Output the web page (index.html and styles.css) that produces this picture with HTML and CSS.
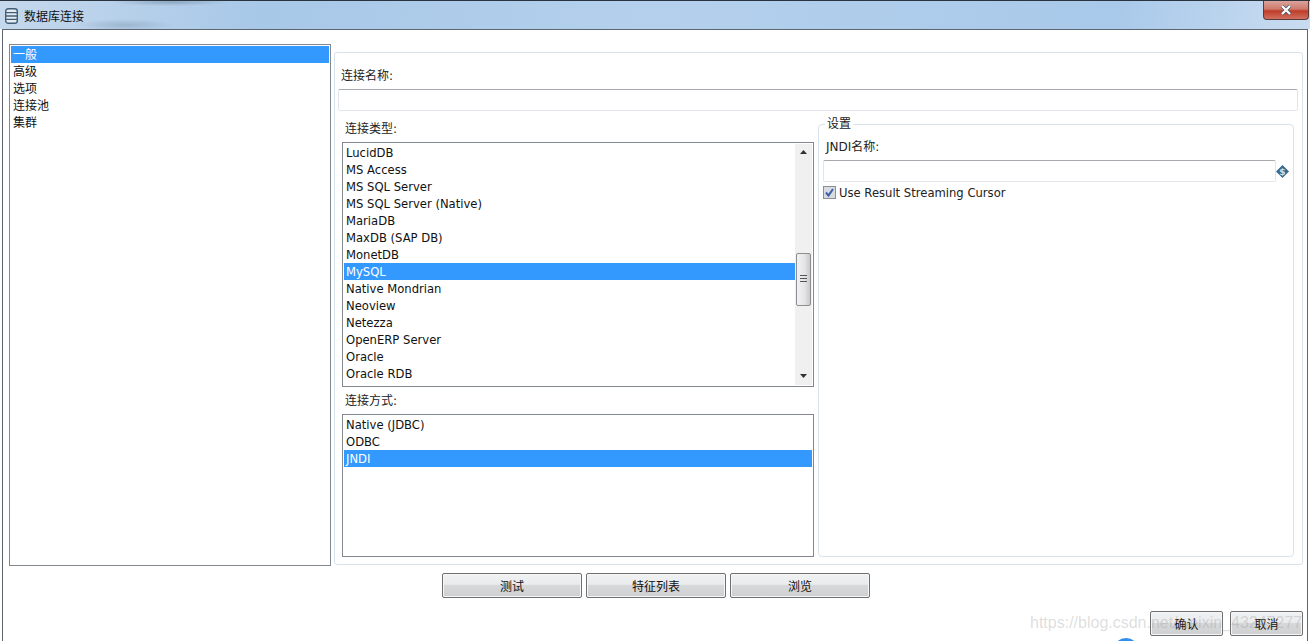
FILE: index.html
```html
<!DOCTYPE html>
<html lang="zh">
<head>
<meta charset="utf-8">
<title>数据库连接</title>
<link rel="stylesheet" href="styles.css">
</head>
<body>
<div class="window">
  <header class="titlebar">
    <div class="title-left">
      <svg class="db-icon" width="13" height="16" viewBox="0 0 13 16">
        <rect x=".7" y=".7" width="11.6" height="14.6" rx="2.6" fill="#e4eaf0" stroke="#3f5f78" stroke-width="1.4"/>
        <path d="M1 4.6h11M1 8h11M1 11.4h11" stroke="#3f5f78" stroke-width="1.3" fill="none"/>
      </svg>
      <span class="title-text">数据库连接</span>
    </div>
    <div class="close-btn">
      <svg width="12" height="10" viewBox="0 0 12 10">
        <path d="M2 1l8 8M10 1l-8 8" stroke="#4a5a6a" stroke-width="3.8" fill="none"/>
        <path d="M2 1l8 8M10 1l-8 8" stroke="#fff" stroke-width="2.2" fill="none"/>
      </svg>
    </div>
  </header>
  <div class="client">
    <div class="main">
      <ul class="list nav">
        <li class="sel">一般</li>
        <li>高级</li>
        <li>选项</li>
        <li>连接池</li>
        <li>集群</li>
      </ul>
      <section class="panel">
        <label class="lbl name-lbl">连接名称:</label>
        <div class="input name-input"></div>
        <div class="columns">
          <div class="col-left">
            <label class="lbl type-lbl">连接类型:</label>
            <div class="typebox">
              <ul class="list-inner type-items">
                <li>LucidDB</li>
                <li>MS Access</li>
                <li>MS SQL Server</li>
                <li>MS SQL Server (Native)</li>
                <li>MariaDB</li>
                <li>MaxDB (SAP DB)</li>
                <li>MonetDB</li>
                <li class="sel">MySQL</li>
                <li>Native Mondrian</li>
                <li>Neoview</li>
                <li>Netezza</li>
                <li>OpenERP Server</li>
                <li>Oracle</li>
                <li>Oracle RDB</li>
              </ul>
              <div class="scrollbar">
                <svg class="arrow up" width="7" height="4" viewBox="0 0 7 4"><path d="M3.5 0L7 4H0z" fill="#333"/></svg>
                <div class="thumb"><span class="grip"></span></div>
                <svg class="arrow down" width="7" height="4" viewBox="0 0 7 4"><path d="M0 0h7L3.5 4z" fill="#333"/></svg>
              </div>
            </div>
            <label class="lbl way-lbl">连接方式:</label>
            <ul class="waybox">
              <li>Native (JDBC)</li>
              <li>ODBC</li>
              <li class="sel">JNDI</li>
            </ul>
          </div>
          <fieldset class="settings">
            <legend>设置</legend>
            <label class="lbl jndi-lbl">JNDI名称:</label>
            <div class="jndi-row">
              <div class="input jndi-input"></div>
              <svg class="var-icon" width="13" height="13" viewBox="0 0 13 13">
                <path d="M6.5 0L13 6.5 6.5 13 0 6.5z" fill="#3a6a8e"/>
                <text class="var-glyph" x="6.5" y="9.6" text-anchor="middle">$</text>
              </svg>
            </div>
            <div class="check-row">
              <svg class="check" width="13" height="13" viewBox="0 0 13 13">
                <rect x=".5" y=".5" width="12" height="12" fill="#d8dce2" stroke="#8a8f96"/>
                <path d="M3 6.5l2.5 3L10 3" stroke="#3c5fa8" stroke-width="2" fill="none"/>
              </svg>
              <span>Use Result Streaming Cursor</span>
            </div>
          </fieldset>
        </div>
      </section>
    </div>
    <div class="actions">
      <button class="btn wide">测试</button>
      <button class="btn wide">特征列表</button>
      <button class="btn wide">浏览</button>
    </div>
    <div class="footer">
      <button class="btn small">确认</button>
      <button class="btn small">取消</button>
    </div>
    <div class="watermark">https://blog.csdn.net/weixin_43247277</div>
    <div class="blue-dot"></div>
  </div>
</div>
</body>
</html>
```
FILE: styles.css
```css
* { box-sizing: border-box; }
html, body { margin: 0; padding: 0; }
body {
  width: 1310px;
  height: 641px;
  overflow: hidden;
  background: #fff;
  font-family: "DejaVu Sans", "Noto Sans CJK SC", sans-serif;
  font-size: 12px;
  color: #111;
}
ul { list-style: none; margin: 0; padding: 0; }
.window {
  display: flex;
  flex-direction: column;
  height: 641px;
  overflow: hidden;
}
.titlebar {
  height: 29px;
  flex: none;
  display: flex;
  justify-content: space-between;
  align-items: flex-start;
  border-top: 1px solid #2a3440;
  padding: 0 1px 0 5px;
  background:
    radial-gradient(ellipse 50px 6px at 125px 24px, rgba(110, 135, 160, .35), transparent),
    radial-gradient(ellipse 60px 4px at 170px 1px, rgba(90, 110, 130, .4), transparent),
    linear-gradient(100deg, #c5d8ec 0%, #a8c8e8 20%, #b4d0ec 50%, #a9c9ea 85%, #c9dcf0 100%);
}
.title-left { display: flex; align-items: center; height: 28px; gap: 6px; padding-top: 1px; }
.title-text { font-size: 12px; color: #111; }
.db-icon { display: block; }
.close-btn {
  width: 46px;
  height: 19px;
  border: 1px solid #5a3a3a;
  border-top: 0;
  border-radius: 0 0 4px 4px;
  background: linear-gradient(#d9a39b 0%, #cf7a6c 45%, #bf3c28 55%, #d07060 100%);
  display: flex;
  align-items: center;
  justify-content: center;
}
.client {
  position: relative;
  flex: 1;
  margin: 0 2px;
  padding: 14px 4px 0 6px;
  border: 1px solid #5d6670;
  border-bottom: 0;
  background: #fff;
  min-height: 0;
}
.main { display: flex; height: 523px; gap: 3px; }
.list.nav {
  width: 322px;
  height: 522px;
  border: 1px solid #828790;
  padding: 1px;
  flex: none;
}
.nav li { height: 17px; line-height: 19px; padding-left: 2px; }
.sel { background: #3399ff; color: #fff; }
.panel {
  flex: 1;
  margin-top: 8px;
  height: 513px;
  border: 1px solid #d9e3ec;
  border-radius: 3px;
  padding: 0 4px 7px 3px;
  display: flex;
  flex-direction: column;
}
.lbl { display: block; color: #222; }
.name-lbl { height: 17px; line-height: 17px; margin: 15px 0 4px 3px; }
.input {
  background: #fff;
  border: 1px solid #e2e6ea;
  border-top-color: #a6a9ae;
  border-radius: 2px;
}
.name-input { height: 22px; }
.columns { display: flex; flex: 1; margin-top: 7px; margin-right: 4px; gap: 4px; min-height: 0; }
.col-left { width: 472px; margin-left: 4px; flex: none; display: flex; flex-direction: column; }
.type-lbl { height: 17px; line-height: 17px; margin: 3px 0 4px 3px; }
.typebox {
  height: 245px;
  display: flex;
  border: 1px solid #828790;
  padding: 1px 1px 1px 1px;
  font-size: 11.6px;
}
.list-inner { flex: 1; }
.type-items li { height: 17px; line-height: 19px; padding-left: 2px; }
.scrollbar {
  width: 17px;
  background: #f0f0f0;
  display: flex;
  flex-direction: column;
  align-items: center;
}
.arrow { display: block; flex: none; }
.arrow.up { margin-top: 6px; }
.arrow.down { margin-top: 68px; }
.thumb {
  width: 15px;
  height: 53px;
  margin-top: 99px;
  border: 1px solid #8b8f94;
  border-radius: 2px;
  background: linear-gradient(90deg, #f2f2f2, #e4e4e4 60%, #c8c8c8);
  display: flex;
  align-items: center;
  justify-content: center;
  flex: none;
}
.grip {
  display: block;
  width: 7px;
  height: 9px;
  background: repeating-linear-gradient(#555 0 1px, transparent 1px 3px);
}
.way-lbl { height: 17px; line-height: 17px; margin: 6px 0 4px 3px; }
.waybox {
  flex: 1;
  border: 1px solid #828790;
  padding: 1px;
  font-size: 11.6px;
}
.waybox li { height: 17px; line-height: 19px; padding-left: 2px; }
.settings {
  flex: 1;
  margin: -1px 0 0 0;
  padding: 0 3px 0 4px;
  border: 1px solid #d9e3ec;
  border-radius: 4px;
  min-width: 0;
}
.settings legend {
  padding: 0 2px;
  margin-left: 2px;
  line-height: 15px;
  color: #222;
}
.jndi-lbl { height: 17px; line-height: 17px; margin: 7px 0 4px 3px; }
.jndi-row { display: flex; align-items: center; }
.jndi-input { flex: 1; height: 22px; }
.var-icon { display: block; margin-right: 1px; }
.var-glyph { font-family: "DejaVu Sans", sans-serif; font-size: 9px; font-weight: 700; fill: #cfe0ec; }
.check-row { display: flex; align-items: center; gap: 3px; margin-top: 2px; height: 17px; color: #222; font-size: 11.6px; }
.check { display: block; flex: none; }
.actions {
  display: flex;
  justify-content: flex-start;
  gap: 4px;
  margin: 6px 0 0 433px;
}
.btn {
  font: inherit;
  color: #111;
  height: 25px;
  padding: 0;
  border: 1px solid #707070;
  border-radius: 2px;
  box-shadow: inset 0 0 0 1px #f4f6f8;
  background: linear-gradient(#f0f1f3 0%, #eaebed 45%, #d6d8d9 50%, #cfd0d1 100%);
}
.wide { width: 140px; }
.small { width: 73px; }
.footer {
  display: flex;
  justify-content: flex-end;
  gap: 7px;
  margin-top: 13px;
}
.watermark {
  position: absolute;
  left: 1027px;
  top: 584px;
  font-family: "Liberation Sans", sans-serif;
  font-size: 16px;
  line-height: 18px;
  color: rgba(150, 150, 150, 0.32);
  white-space: nowrap;
  pointer-events: none;
}
.blue-dot {
  position: absolute;
  left: 1110px;
  top: 608px;
  width: 26px;
  height: 26px;
  border-radius: 50%;
  background: #2f8fee;
}
```
